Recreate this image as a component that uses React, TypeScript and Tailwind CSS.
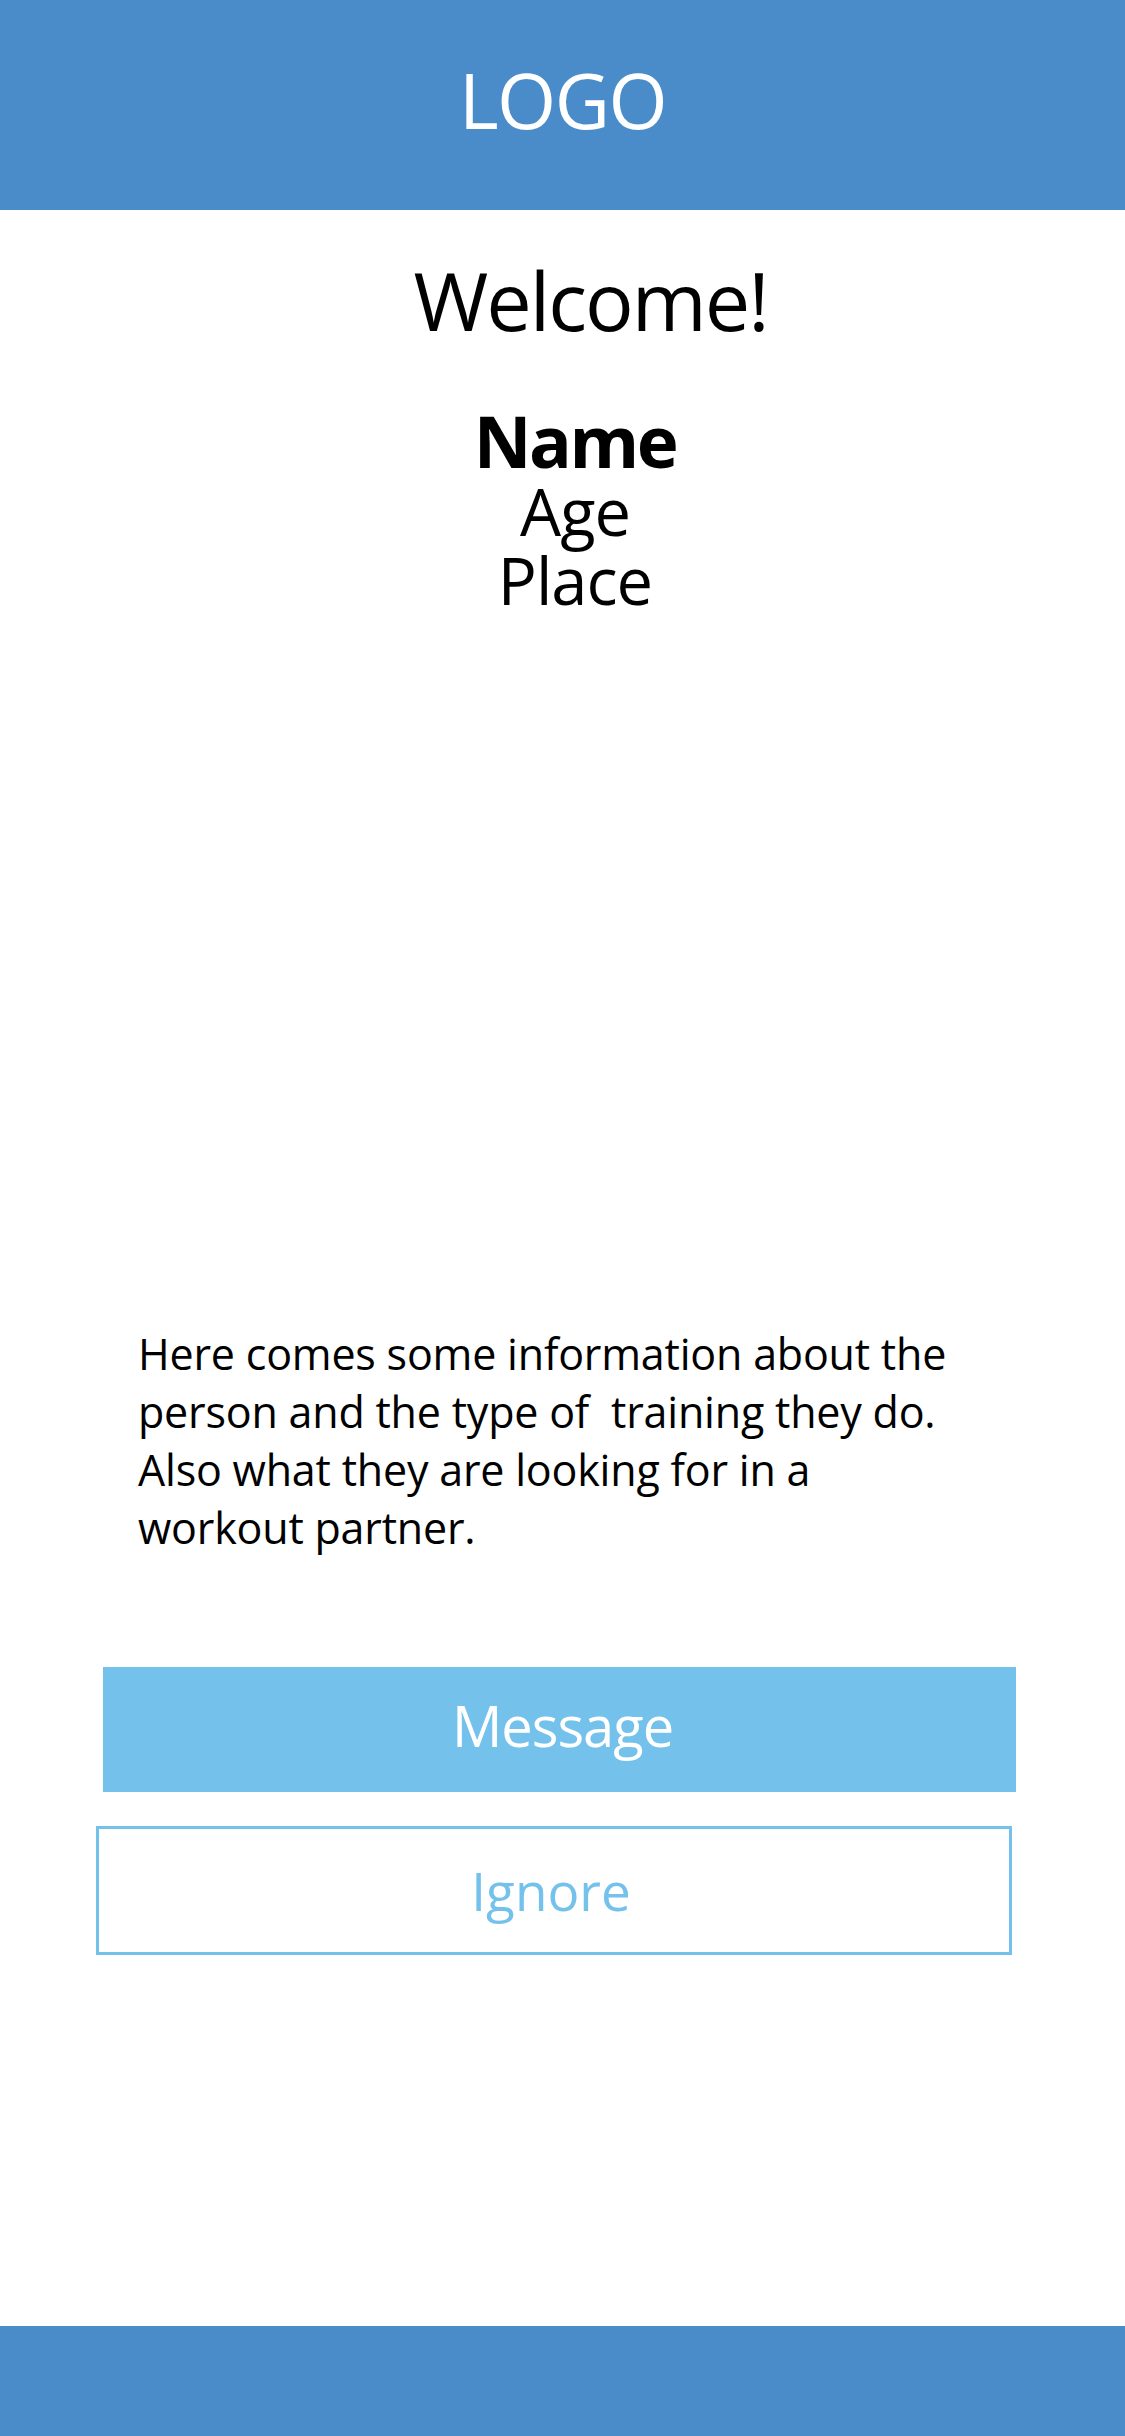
export default function App() {
  return (
    <div className="w-[1125px] min-h-[2436px] flex flex-col bg-white font-['Open_Sans',sans-serif] text-black">
      {/* Header */}
      <header className="h-[210px] bg-[#4a8cc9] flex items-center justify-center pb-[11px]">
        <span className="text-white text-[76px] leading-none tracking-[-1.5px]">LOGO</span>
      </header>

      {/* Content */}
      <main className="flex-1 flex flex-col">
        <h1 className="mt-[49px] text-center text-[81px] leading-none tracking-[-2px] pl-[56px]">Welcome!</h1>

        <div className="mt-[64px] flex flex-col items-center pl-[25px]">
          <p className="text-[71px] leading-[73px] font-bold tracking-[-2.5px]">Name</p>
          <p className="text-[65px] leading-[69px] tracking-[-1px]">Age</p>
          <p className="text-[65px] leading-[69px] tracking-[-1px]">Place</p>
        </div>

        <div className="mt-[710px] pl-[138px] text-[43px] leading-[58px] tracking-[-0.2px]">
          <p>Here comes some information about the</p>
          <p>person and the type of{"\u00a0"} training they do.</p>
          <p>Also what they are looking for in a</p>
          <p>workout partner.</p>
        </div>

        <button className="mt-[110px] ml-[103px] w-[913px] h-[125px] bg-[#74c2eb] text-white text-[56px] leading-none tracking-[-1px] flex items-center justify-center pb-[10px] pl-[6px]">
          Message
        </button>

        <button className="mt-[34px] ml-[96px] w-[916px] h-[129px] border-[3px] border-[#74c2eb] text-[#74c2eb] text-[53px] leading-none flex items-center justify-center pr-[6px]">
          Ignore
        </button>
      </main>

      {/* Footer */}
      <footer className="h-[110px] bg-[#4a8cc9]" />
    </div>
  );
}
